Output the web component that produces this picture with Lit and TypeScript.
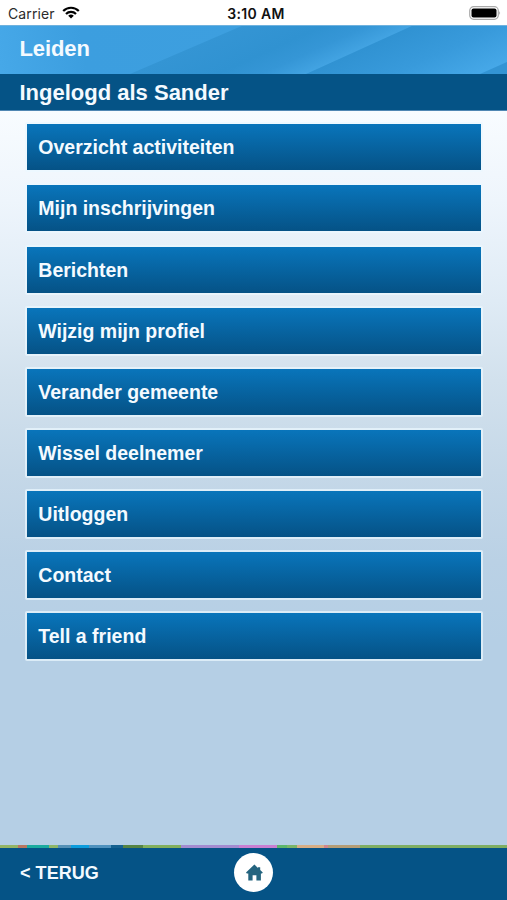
import { LitElement, html, css } from "lit";
import { customElement } from "lit/decorators.js";

const MENU = [
  "Overzicht activiteiten",
  "Mijn inschrijvingen",
  "Berichten",
  "Wijzig mijn profiel",
  "Verander gemeente",
  "Wissel deelnemer",
  "Uitloggen",
  "Contact",
  "Tell a friend",
];

// Coloured strip above the toolbar: [width, colour]
const STRIP: [number, string][] = [
  [18, "#94b565"], [9, "#b97761"], [22, "#1bab9f"], [9, "#8db668"],
  [13, "#5490b5"], [18, "#0c9cdc"], [22, "#4e91bd"], [12, "#15618f"],
  [20, "#568443"], [38, "#82af5c"], [58, "#a38bd0"], [38, "#c97fd2"],
  [10, "#5bb66b"], [10, "#7ab568"], [27, "#d7ae85"], [4, "#d1858c"],
  [32, "#b49d76"], [147, "#7fae62"],
];

@customElement("app-root")
export class AppRoot extends LitElement {
  static styles = css`
    :host {
      display: flex;
      flex-direction: column;
      height: 900px;
      width: 507px;
      overflow: hidden;
      font-family: "Liberation Sans", Arial, sans-serif;
      color: #f4faff;
      font-weight: bold;
    }
    .status {
      flex: none;
      height: 25px;
      background: #fff;
      color: #111;
      display: grid;
      grid-template-columns: 1fr auto 1fr;
      align-items: center;
      font: 14px/26px Inter, "Liberation Sans", sans-serif;
      padding: 1px 6px 0 8px;
      box-sizing: border-box;
    }
    .carrier { display: flex; align-items: center; gap: 7px; color: #2b2b2b; letter-spacing: 0.1px; }
    .carrier svg { margin-bottom: 3px; }
    .time { font-weight: 600; letter-spacing: 0.3px; margin-left: 3px; }
    .battery { justify-self: end; margin-bottom: 2px; }
    svg { display: block; }
    .header {
      flex: none;
      height: 49px;
      display: grid;
      background: #3a9bdc;
    }
    .header > * { grid-area: 1 / 1; }
    .title { font-size: 22px; line-height: 48px; padding-left: 19.5px; margin: 0; letter-spacing: -0.1px; }
    .user {
      flex: none;
      height: 37px;
      background: #055386;
      border-bottom: 1px solid #5087b3;
      box-sizing: border-box;
      font-size: 22px;
      line-height: 37px;
      padding-left: 19.5px;
    }
    .main {
      flex: 1;
      min-height: 0;
      background: linear-gradient(#f8fcff 0, #eef5fc 90px, #dfebf5 190px, #d2e1ed 270px, #c5d8e8 360px, #bad1e5 450px, #b5cfe5 530px);
      display: flex;
      flex-direction: column;
      gap: 11.1px;
      padding: 11.4px 24.5px 0 25px;
    }
    .item {
      flex: none;
      box-sizing: border-box;
      height: 50px;
      border: 2px solid rgba(235, 248, 255, 0.7);
      border-radius: 2px;
      background: linear-gradient(#0975bb, #055286) padding-box;
      font-size: 19.5px;
      line-height: 46px;
      padding-left: 11.3px;
    }
    .strip { flex: none; display: flex; height: 3px; }
    .toolbar {
      flex: none;
      height: 52px;
      background: #055386;
      display: grid;
      grid-template-columns: 1fr auto 1fr;
      align-items: center;
    }
    .back { font-size: 18px; padding-left: 20px; line-height: 48px; margin-top: -3px; letter-spacing: 0.05px; }
    .home {
      width: 39px;
      height: 39px;
      border-radius: 50%;
      background: #fff;
      margin-top: -3px;
      display: grid;
      place-items: center;
    }
  `;

  private wifi() {
    return html`<svg width="18" height="13" viewBox="0 0 18 13">
      <g fill="none" stroke="#000" stroke-width="2.2">
        <path d="M1.2 5 A11 11 0 0 1 16.8 5" />
        <path d="M4 8 A7 7 0 0 1 14 8" />
      </g>
      <path d="M9 12.6 L6.2 9.8 A4 4 0 0 1 11.8 9.8 Z" />
    </svg>`;
  }

  private sky() {
    return html`<svg width="507" height="49" viewBox="0 0 507 49">
      <defs>
        <linearGradient id="a" gradientUnits="userSpaceOnUse" x1="0" y1="40" x2="240" y2="0">
          <stop offset="0" stop-color="#46a8e8" /><stop offset="0.35" stop-color="#3c9edf" /><stop offset="1" stop-color="#3d9fdf" />
        </linearGradient>
        <linearGradient id="b" gradientUnits="userSpaceOnUse" x1="130" y1="49" x2="160" y2="115">
          <stop offset="0" stop-color="#3495d4" /><stop offset="0.5" stop-color="#3092d1" /><stop offset="0.75" stop-color="#3596d6" /><stop offset="1" stop-color="#42a3e2" />
        </linearGradient>
        <linearGradient id="c" gradientUnits="userSpaceOnUse" x1="306" y1="49" x2="336" y2="115">
          <stop offset="0" stop-color="#3092d2" /><stop offset="0.5" stop-color="#389adb" /><stop offset="1" stop-color="#46a8e8" />
        </linearGradient>
      </defs>
      <rect width="507" height="49" fill="url(#a)" />
      <path d="M130 49 L244 0 H507 V49 Z" fill="url(#b)" />
      <path d="M306 49 L414 0 H507 V49 Z" fill="url(#c)" />
      <path d="M480 49 L507 37 V49 Z" fill="#3394d4" />
      <rect width="507" height="1" fill="#6fb2de" />
    </svg>`;
  }

  render() {
    return html`
      <div class="status">
        <div class="carrier"><span>Carrier</span>${this.wifi()}</div>
        <div class="time">3:10 AM</div>
        <svg class="battery" width="33" height="14" viewBox="0 0 33 14">
          <rect x="1.7" y="0.7" width="28.6" height="12.6" rx="4" fill="#fff" stroke="#aaa" stroke-width="1.2" />
          <rect x="3.5" y="2.4" width="25" height="9.2" rx="2" fill="#000" />
          <path d="M31.3 5 Q33 7 31.3 9 Z" fill="#999" />
        </svg>
      </div>
      <div class="header">${this.sky()}<h1 class="title">Leiden</h1></div>
      <div class="user">Ingelogd als Sander</div>
      <div class="main">${MENU.map((m) => html`<div class="item">${m}</div>`)}</div>
      <div class="strip">
        ${STRIP.map(([w, c]) => html`<div style="width:${w}px;background:${c}"></div>`)}
      </div>
      <div class="toolbar">
        <div class="back">&lt; TERUG</div>
        <div class="home">
          <svg width="18" height="18" viewBox="0 0 18 18">
            <path d="M9.4 0.6 L13 3.9 V3.2 H15.2 V5.9 L17.8 8.4 L17 9.6 H15.9 V16.4 H11.4 V11.2 H7.6 V16.4 H3.3 V9.6 H1.8 L1 8.4 Z" fill="#24647f" />
          </svg>
        </div>
      </div>
    `;
  }
}
